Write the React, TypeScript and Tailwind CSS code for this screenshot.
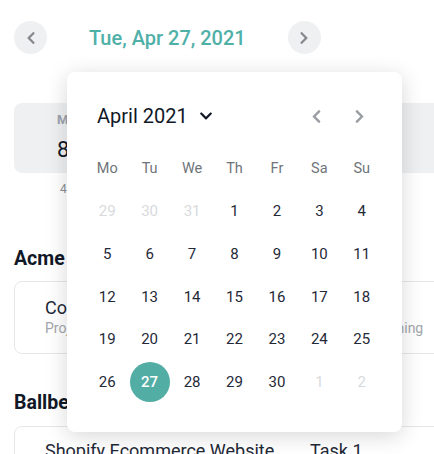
import React from 'react';
import { FaChevronLeft, FaChevronRight, FaChevronDown } from 'react-icons/fa';

const weekdays = ['Mo', 'Tu', 'We', 'Th', 'Fr', 'Sa', 'Su'];

// April 2021, weeks starting on Monday
const days: { n: number; muted?: boolean }[] = [
  { n: 29, muted: true }, { n: 30, muted: true }, { n: 31, muted: true },
  ...Array.from({ length: 30 }, (_, i) => ({ n: i + 1 })),
  { n: 1, muted: true }, { n: 2, muted: true },
];

const App: React.FC = () => {
  return (
    <div className="relative w-[434px] h-[454px] overflow-hidden bg-white font-['Roboto',sans-serif]">
      {/* Date switcher */}
      <div className="flex items-center gap-[42px] pl-[14px] pt-[21px]">
        <button className="w-[33px] h-[33px] rounded-full bg-[#eef0f2] flex items-center justify-center text-[#84878b]">
          <FaChevronLeft size={14} />
        </button>
        <span className="text-[20px] font-medium text-[#4fb0a8] leading-none">Tue, Apr 27, 2021</span>
        <button className="w-[33px] h-[33px] rounded-full bg-[#eef0f2] flex items-center justify-center text-[#84878b]">
          <FaChevronRight size={14} />
        </button>
      </div>

      {/* Week summary */}
      <div className="ml-[14px] mt-[49px] w-[480px]">
        <div className="h-[70px] rounded-lg bg-[#eef0f2] flex">
          <div className="pl-[43px] pt-[9px]">
            <div className="text-[13px] font-bold text-[#9ca3af] leading-[16px]">MON</div>
            <div className="text-[22px] text-[#111827] leading-[26px] mt-[9px]">8.5</div>
          </div>
        </div>
        <div className="pl-[46px] pt-[9px] text-[12px] text-[#8b8f94] leading-[14px]">4h left</div>
      </div>

      {/* Clients */}
      <div className="ml-[14px] mt-[52px] w-[480px]">
        <h2 className="text-[19.5px] font-bold text-[#111827] leading-[22px]">Acme Corporation</h2>
        <div className="mt-[11px] h-[73px] rounded-lg border border-[#e5e7eb] flex items-center pl-[30px]">
          <div className="w-[265px] -mt-[2px]">
            <div className="text-[18px] text-[#1f2937] leading-[22px]">Content Writing</div>
            <div className="text-[14px] text-[#a3a6ab] leading-[18px]">Project Alpha</div>
          </div>
          <div className="-mt-[2px]">
            <div className="text-[18px] text-[#1f2937] leading-[22px]">Task 2</div>
            <div className="text-[14px] text-[#a3a6ab] leading-[18px]">Graphic Designing</div>
          </div>
        </div>

        <h2 className="mt-[38px] text-[19.5px] font-bold text-[#111827] leading-[22px]">Ballbearings Inc</h2>
        <div className="mt-[12px] h-[73px] rounded-lg border border-[#e5e7eb] flex items-start pt-[13px] pl-[30px]">
          <div className="w-[265px] text-[18px] text-[#1f2937] leading-[22px]">Shopify Ecommerce Website</div>
          <div className="text-[18px] text-[#1f2937] leading-[22px]">Task 1</div>
        </div>
      </div>

      {/* Date picker popover */}
      <div className="absolute left-[67px] top-[72px] w-[335px] h-[360px] bg-white rounded-lg shadow-[0_4px_22px_rgba(0,0,0,0.16)]">
        <div className="flex items-center h-[40px] mt-[24px] pl-[30px] pr-[35px]">
          <span className="text-[20px] text-[#111827]">April 2021</span>
          <FaChevronDown size={14} className="ml-[11px] text-[#111827]" />
          <div className="ml-auto flex items-center gap-[28px] text-[#9a9da1]">
            <FaChevronLeft size={15} />
            <FaChevronRight size={15} />
          </div>
        </div>
        <div className="grid grid-cols-7 px-[19px] mt-[11.5px]">
          {weekdays.map((d) => (
            <div key={d} className="h-[42.7px] flex items-center justify-center text-[14.5px] text-[#707479]">
              {d}
            </div>
          ))}
          {days.map((d, i) => {
            const selected = !d.muted && d.n === 27;
            return (
              <div key={i} className="h-[42.7px] flex items-center justify-center">
                <span
                  className={
                    selected
                      ? 'w-[40px] h-[40px] rounded-full bg-[#52ada5] text-white font-medium text-[15px] flex items-center justify-center'
                      : d.muted
                      ? 'text-[15px] text-[#d8dadd]'
                      : 'text-[15px] text-[#1f2937]'
                  }
                >
                  {d.n}
                </span>
              </div>
            );
          })}
        </div>
      </div>
    </div>
  );
};

export default App;
